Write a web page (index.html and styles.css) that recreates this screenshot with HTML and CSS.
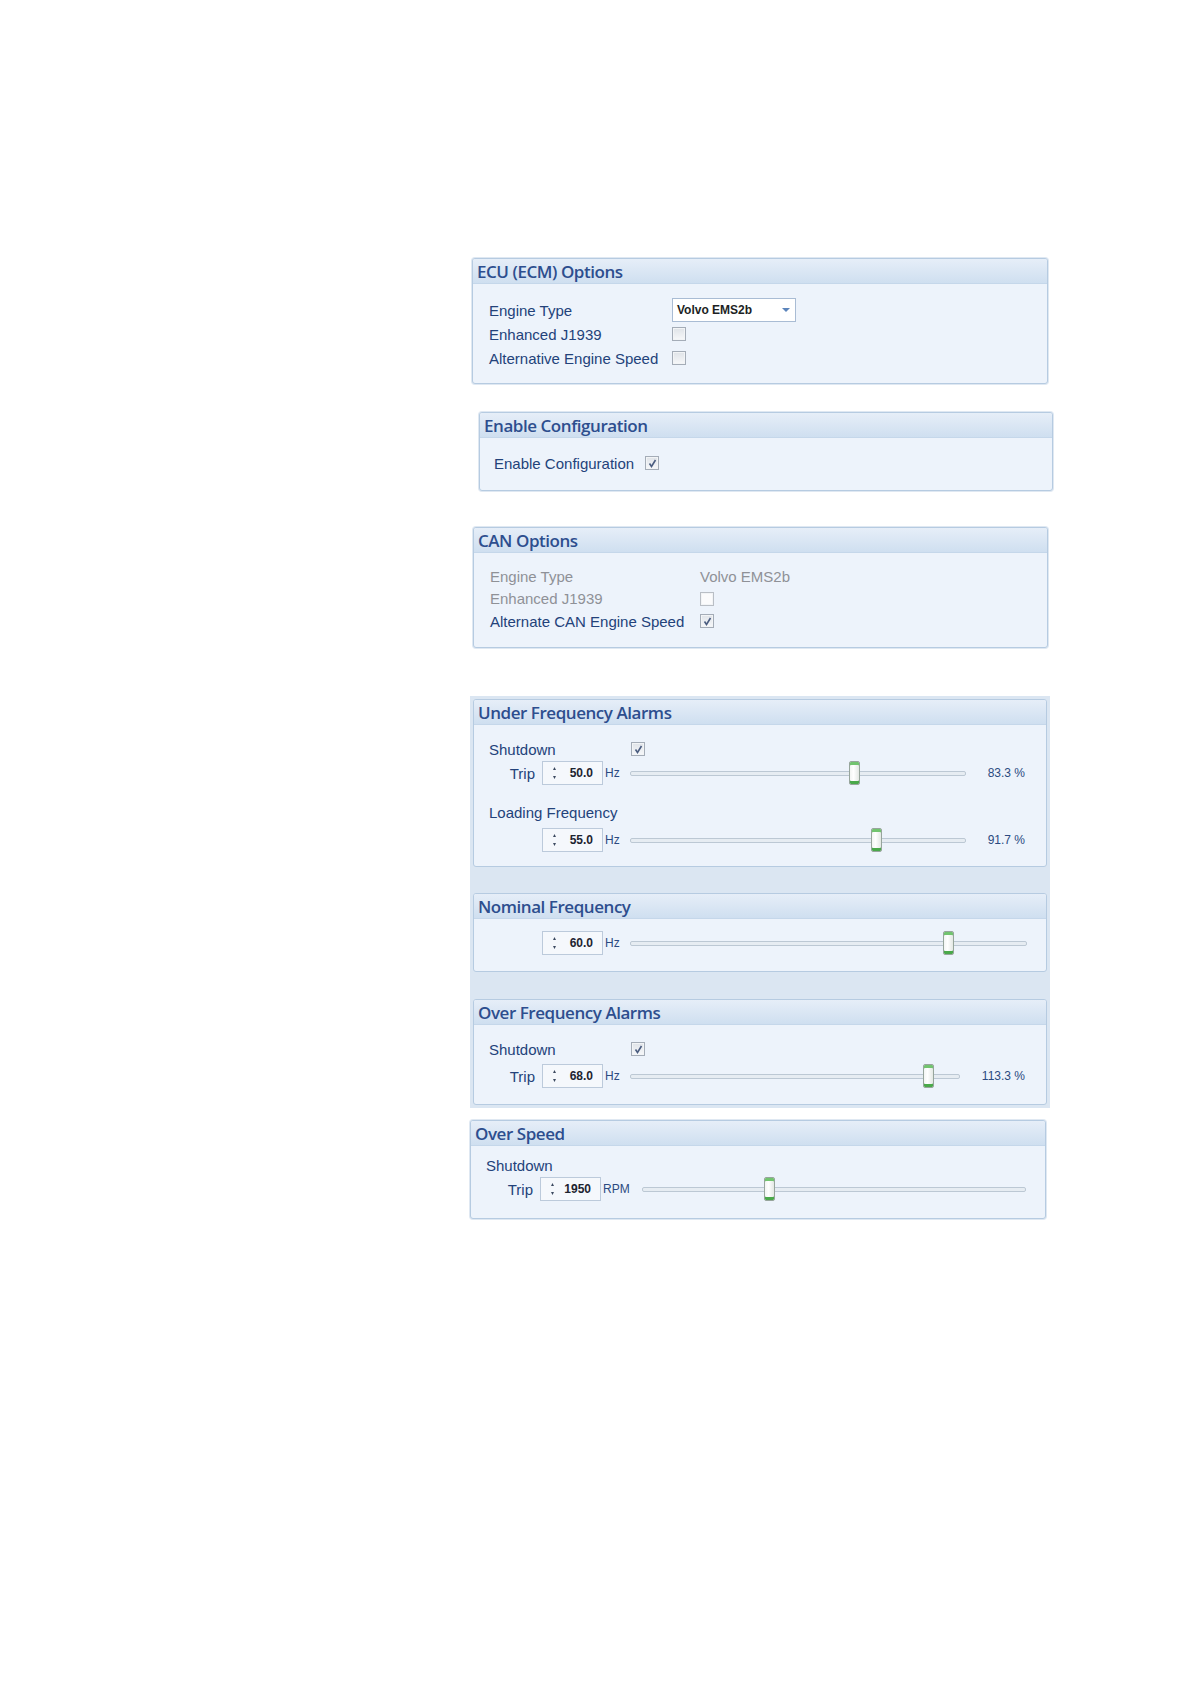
FILE: index.html
```html
<!DOCTYPE html>
<html lang="en">
<head>
  <meta charset="UTF-8" />
  <title>Engine Options</title>
  <link rel="stylesheet" href="styles.css">
</head>
<body>
  <div class="page">

    <div class="panel panel-ecu">
      <div class="panel-head">ECU (ECM) Options</div>
      <div class="panel-body">
        <div class="row">
          <span class="label">Engine Type</span>
          <div class="select">Volvo EMS2b<span class="caret"></span></div>
        </div>
        <div class="row">
          <span class="label">Enhanced J1939</span>
          <span class="cb"></span>
        </div>
        <div class="row">
          <span class="label">Alternative Engine Speed</span>
          <span class="cb"></span>
        </div>
      </div>
    </div>

    <div class="panel panel-enable">
      <div class="panel-head">Enable Configuration</div>
      <div class="panel-body">
        <div class="row">
          <span class="label">Enable Configuration</span>
          <span class="cb checked"><svg viewBox="0 0 11 11"><path d="M2.5 5.5 L4.5 8.5 L8.5 2" /></svg></span>
        </div>
      </div>
    </div>

    <div class="panel panel-can">
      <div class="panel-head">CAN Options</div>
      <div class="panel-body">
        <div class="row">
          <span class="label muted">Engine Type</span>
          <span class="value muted">Volvo EMS2b</span>
        </div>
        <div class="row">
          <span class="label muted">Enhanced J1939</span>
          <span class="cb disabled"></span>
        </div>
        <div class="row">
          <span class="label">Alternate CAN Engine Speed</span>
          <span class="cb checked"><svg viewBox="0 0 11 11"><path d="M2.5 5.5 L4.5 8.5 L8.5 2" /></svg></span>
        </div>
      </div>
    </div>

    <div class="group">
      <div class="panel panel-under">
        <div class="panel-head">Under Frequency Alarms</div>
        <div class="panel-body">
          <div class="row">
            <span class="label">Shutdown</span>
            <span class="cb checked"><svg viewBox="0 0 11 11"><path d="M2.5 5.5 L4.5 8.5 L8.5 2" /></svg></span>
          </div>
          <div class="srow">
            <span class="slabel">Trip</span>
            <div class="spin"><svg class="arrows" viewBox="0 0 5 14"><path d="M2.5 1 L4 4 L1 4 Z M1 10 L4 10 L2.5 13 Z" /></svg><span>50.0</span></div>
            <span class="unit">Hz</span>
            <div class="slider"><div class="track"></div><div class="thumb" style="left: 66.7%"></div></div>
            <span class="pct">83.3 %</span>
          </div>
          <div class="row row-gap">
            <span class="label">Loading Frequency</span>
          </div>
          <div class="srow srow-tight">
            <span class="slabel"></span>
            <div class="spin"><svg class="arrows" viewBox="0 0 5 14"><path d="M2.5 1 L4 4 L1 4 Z M1 10 L4 10 L2.5 13 Z" /></svg><span>55.0</span></div>
            <span class="unit">Hz</span>
            <div class="slider"><div class="track"></div><div class="thumb" style="left: 73.3%"></div></div>
            <span class="pct">91.7 %</span>
          </div>
        </div>
      </div>

      <div class="panel panel-nominal">
        <div class="panel-head">Nominal Frequency</div>
        <div class="panel-body">
          <div class="srow">
            <span class="slabel"></span>
            <div class="spin"><svg class="arrows" viewBox="0 0 5 14"><path d="M2.5 1 L4 4 L1 4 Z M1 10 L4 10 L2.5 13 Z" /></svg><span>60.0</span></div>
            <span class="unit">Hz</span>
            <div class="slider slider-end"><div class="track"></div><div class="thumb" style="left: 80%"></div></div>
          </div>
        </div>
      </div>

      <div class="panel panel-over">
        <div class="panel-head">Over Frequency Alarms</div>
        <div class="panel-body">
          <div class="row">
            <span class="label">Shutdown</span>
            <span class="cb checked"><svg viewBox="0 0 11 11"><path d="M2.5 5.5 L4.5 8.5 L8.5 2" /></svg></span>
          </div>
          <div class="srow srow-over">
            <span class="slabel">Trip</span>
            <div class="spin"><svg class="arrows" viewBox="0 0 5 14"><path d="M2.5 1 L4 4 L1 4 Z M1 10 L4 10 L2.5 13 Z" /></svg><span>68.0</span></div>
            <span class="unit">Hz</span>
            <div class="slider"><div class="track"></div><div class="thumb" style="left: 90.5%"></div></div>
            <span class="pct">113.3 %</span>
          </div>
        </div>
      </div>
    </div>

    <div class="panel panel-speed">
      <div class="panel-head">Over Speed</div>
      <div class="panel-body">
        <div class="row row-short">
          <span class="label">Shutdown</span>
        </div>
        <div class="srow">
          <span class="slabel">Trip</span>
          <div class="spin"><svg class="arrows" viewBox="0 0 5 14"><path d="M2.5 1 L4 4 L1 4 Z M1 10 L4 10 L2.5 13 Z" /></svg><span>1950</span></div>
          <span class="unit unit-rpm">RPM</span>
          <div class="slider slider-end"><div class="track"></div><div class="thumb" style="left: 33%"></div></div>
        </div>
      </div>
    </div>

  </div>
</body>
</html>
```

FILE: styles.css
```css
* {
  box-sizing: border-box;
}

body {
  margin: 0;
  background: #fff;
  font-family: "Liberation Sans", Arial, sans-serif;
  color: #23427a;
}

.page {
  padding: 258px 0 200px 472px;
  width: 1062px;
}

/* panels */

.panel {
  width: 576px;
  border: 1px solid #b6cbe1;
  border-radius: 3px;
  background: #edf3fb;
  box-shadow: 0 0 0 1px #dfe8f2;
}

.panel-head {
  height: 25px;
  line-height: 26px;
  padding-left: 4px;
  font-family: "Open Sans", "Liberation Sans", sans-serif;
  font-size: 17px;
  font-weight: 600;
  letter-spacing: -0.45px;
  color: #2d4e8e;
  background: linear-gradient(#e6eef8, #cfdff0);
  border-bottom: 1px solid #c5d7ea;
  border-radius: 2px 2px 0 0;
  white-space: nowrap;
  overflow: hidden;
}

.panel-body {
  padding: 14px 0 13px 16px;
}

.row {
  display: grid;
  grid-template-columns: 183px auto;
  align-items: center;
  height: 24px;
  font-size: 15px;
}

.label {
  white-space: nowrap;
}

.muted {
  color: #8f9197;
}

.value {
  font-size: 15px;
}

/* enable configuration */

.panel-enable {
  margin-top: 28px;
  margin-left: 7px;
  width: 574px;
  height: 79px;
}

.panel-enable .panel-body {
  padding: 13px 0 0 14px;
}

.panel-enable .row {
  grid-template-columns: 151px auto;
}

/* CAN */

.panel-can {
  margin-top: 36px;
  margin-left: 1px;
  width: 575px;
  height: 121px;
}

.panel-can .panel-body {
  padding: 12px 0 0 16px;
}

.panel-can .row {
  grid-template-columns: 210px auto;
  height: 22.5px;
}

/* dropdown */

.select {
  position: relative;
  width: 124px;
  height: 24px;
  border: 1px solid #a9bcd4;
  background: #fff;
  padding-left: 4px;
  line-height: 22px;
  font-size: 12px;
  font-weight: bold;
  color: #1d1f24;
}

.caret {
  position: absolute;
  right: 5px;
  top: 9px;
  border-left: 4px solid transparent;
  border-right: 4px solid transparent;
  border-top: 4px solid #5b84bb;
}

/* checkbox */

.cb {
  width: 14px;
  height: 14px;
  border: 1px solid #a4acb7;
  background: linear-gradient(#dfe3e8, #f7f8fa);
  box-shadow: inset 0 0 0 1px #f2f4f6;
  display: flex;
  align-items: center;
  justify-content: center;
}

.cb.disabled {
  border-color: #b9bec5;
  background: #fbfbfc;
}

.cb svg {
  width: 11px;
  height: 11px;
  fill: none;
  stroke: #4b5d80;
  stroke-width: 1.6;
}

/* frequency group */

.group {
  margin-top: 48px;
  margin-left: -2px;
  width: 580px;
  padding: 3px;
  background: #dbe6f2;
}

.group .panel {
  width: 574px;
  box-shadow: none;
}

.panel-under .panel-body {
  padding: 12px 0 14px 0;
}

.panel-under .row,
.panel-over .row {
  padding-left: 15px;
  grid-template-columns: 142px auto;
}

.row-gap {
  margin-top: 15px;
}

.panel-nominal {
  margin-top: 26px;
}

.panel-nominal .panel-body {
  padding: 12px 0 16px 0;
}

.panel-over {
  margin-top: 27px;
}

.panel-over .panel-body {
  padding: 12px 0 16px 0;
}

/* slider rows */

.srow {
  display: flex;
  align-items: center;
  height: 24px;
}

.srow-tight {
  margin-top: 4px;
}

.srow-over {
  margin-top: 3px;
}

.slabel {
  width: 61px;
  margin-right: 7px;
  text-align: right;
  font-size: 15px;
}

.spin {
  display: flex;
  align-items: center;
  justify-content: space-between;
  width: 61px;
  height: 24px;
  padding: 0 9px 0 9px;
  border: 1px solid #bccadb;
  background: #f5f8fc;
  font-size: 12px;
  font-weight: bold;
  color: #1d2430;
}

.arrows {
  width: 5px;
  height: 14px;
  fill: #3c4a60;
}

.unit {
  margin-left: 2px;
  margin-right: 10px;
  font-size: 12px;
  color: #2b4a80;
}

.unit-rpm {
  margin-right: 12px;
}

.slider {
  position: relative;
  flex: 1;
  height: 24px;
}

.slider-end {
  margin-right: 19px;
}

.track {
  position: absolute;
  left: 0;
  right: 0;
  top: 10px;
  height: 5px;
  border: 1px solid #bcc8d4;
  border-radius: 2px;
  background: #e6ecf2;
}

.thumb {
  position: absolute;
  top: 0;
  width: 11px;
  height: 24px;
  margin-left: -5px;
  border: 1px solid #97a59c;
  border-radius: 2px;
  background: linear-gradient(90deg, #f3f5f3, #ffffff 40%, #e3e8e4);
  box-shadow: inset 0 3px 0 #72c46f, inset 0 -3px 0 #4aa94a;
}

.pct {
  margin-left: 22px;
  margin-right: 21px;
  font-size: 12px;
  color: #2b4a80;
}

/* over speed */

.panel-speed {
  margin-top: 12px;
  margin-left: -2px;
  height: 99px;
}

.panel-speed .panel-body {
  padding: 8px 0 0 0;
}

.panel-speed .row {
  padding-left: 15px;
  height: 22px;
}

.panel-speed .srow {
  margin-top: 1px;
}

.panel-speed .slabel {
  width: 62px;
}
```
